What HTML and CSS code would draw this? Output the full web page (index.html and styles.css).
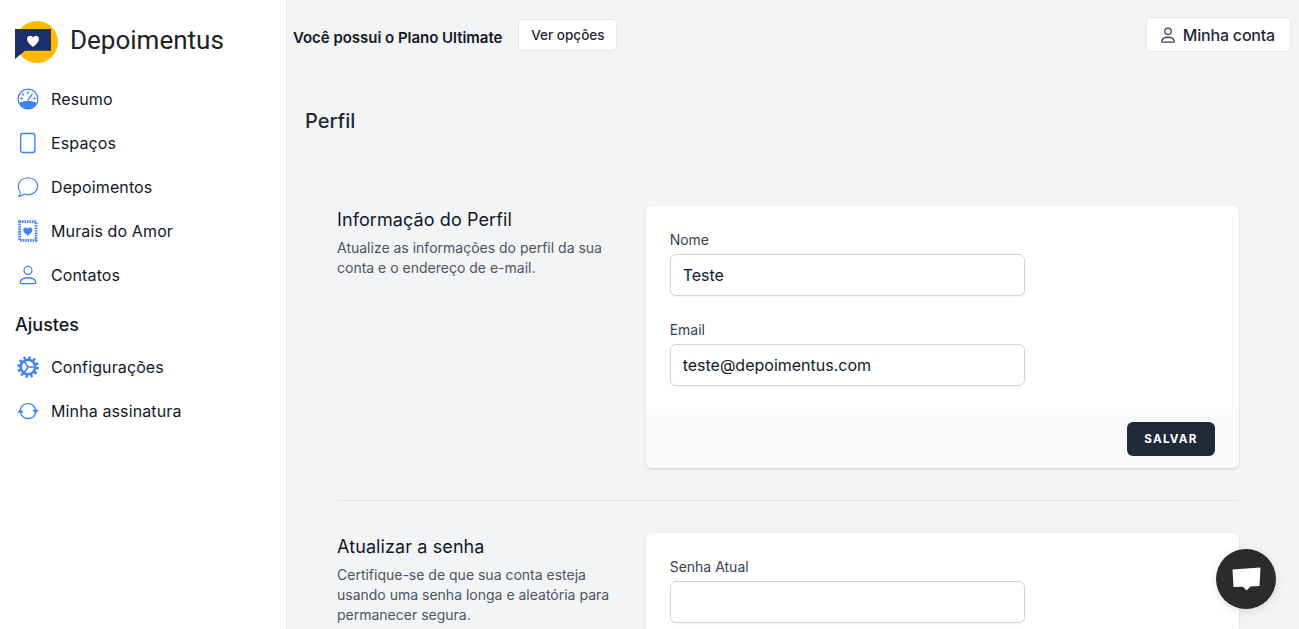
FILE: index.html
```html
<!DOCTYPE html>
<html lang="pt-BR">
<head>
<meta charset="utf-8">
<title>Depoimentus</title>
<link rel="stylesheet" href="styles.css">
</head>
<body>
<div class="app">
  <aside class="sidebar">
    <div class="brand">
      <svg class="logo" width="44" height="44" viewBox="0 0 44 44">
        <circle cx="22" cy="22" r="21" fill="#ffb900"/>
        <path d="M0 9H35.700V30.700H10L0 39Z" fill="#1b2f6e"/>
        <path d="M34.700 9h1V30.700h-1Z" fill="#33302a"/>
        <path d="M18 27c-1-1-6-4.200-6-7.900 0-2 1.400-3.300 3.100-3.300 1.200 0 2.300.7 2.900 1.800.6-1.100 1.700-1.800 2.900-1.800 1.700 0 3.100 1.300 3.100 3.300 0 3.700-5 6.900-6 7.900Z" fill="#fff"/>
      </svg>
      <span class="brand-name">Depoimentus</span>
    </div>
    <nav class="nav">
      <a class="nav-item">
        <svg class="nav-icon" viewBox="0 0 24 24" fill="none" stroke="#3f83f0" stroke-width="1.400">
          <circle cx="12" cy="12" r="10.800"/>
          <path d="M2.200 16.500C5 15 8 14.300 12 14.300s7 .7 9.800 2.200C20 20.500 16.500 22.800 12 22.800S4 20.500 2.200 16.500Z" fill="#3f83f0" stroke="none"/>
          <path d="M12 13 16.500 7M12 4v2M6 6.500l1.200 1.200M4 11.500h2M18 11.500h2" stroke-linecap="round" stroke-width="1.600"/>
        </svg>
        <span>Resumo</span>
      </a>
      <a class="nav-item">
        <svg class="nav-icon" viewBox="0 0 24 24" fill="none" stroke="#3f83f0" stroke-width="1.500"><rect x="4" y="1.700" width="15.500" height="20.600" rx="2"/></svg>
        <span>Espaços</span>
      </a>
      <a class="nav-item">
        <svg class="nav-icon" viewBox="0 0 24 24" fill="none" stroke="#3f83f0" stroke-width="1.300"><path d="M12 1.900c6 0 10.500 4 10.500 9.200S18 20.300 12 20.300c-1.500 0-2.900-.2-4.100-.7-1.500 1.500-3.700 2.500-6 2.600 1.100-1.200 1.700-2.700 1.700-4.300C2 16.200 1.500 13.700 1.500 11.100 1.500 5.900 6 1.900 12 1.900Z" stroke-linejoin="round"/></svg>
        <span>Depoimentos</span>
      </a>
      <a class="nav-item">
        <svg class="nav-icon" viewBox="0 0 24 24" fill="none" stroke="#3f83f0"><rect x="2.800" y="1.800" width="18" height="20.400" stroke-width="3" stroke-dasharray="1.700 1"/><path d="M11.800 16.800c-.9-.9-5-3.200-5-6 0-1.500 1.100-2.500 2.500-2.500 1 0 2 .6 2.500 1.500.5-.9 1.500-1.500 2.500-1.500 1.400 0 2.500 1 2.500 2.500 0 2.800-4.100 5.100-5 6Z" fill="#3f83f0" stroke="none"/></svg>
        <span>Murais do Amor</span>
      </a>
      <a class="nav-item">
        <svg class="nav-icon" viewBox="0 0 24 24" fill="none" stroke="#3f83f0" stroke-width="1.400"><circle cx="12" cy="7" r="4.300"/><path d="M4.500 21.500h15a1 1 0 0 0 1-1.100c-.4-3.300-4-5.400-8.500-5.400s-8.100 2.100-8.500 5.400a1 1 0 0 0 1 1.100Z"/></svg>
        <span>Contatos</span>
      </a>
    </nav>
    <h2 class="nav-heading">Ajustes</h2>
    <nav class="nav">
      <a class="nav-item">
        <svg class="nav-icon" viewBox="0 0 24 24" fill="none" stroke="#3f83f0"><circle cx="12" cy="12" r="10.300" stroke-width="3" stroke-dasharray="2.700 2.690"/><circle cx="12" cy="12" r="8" stroke-width="2.800"/><path d="M12 12 7 4.500M12 12 7 19.500M12 12H20.500" stroke-width="1.800"/></svg>
        <span>Configurações</span>
      </a>
      <a class="nav-item">
        <svg class="nav-icon" viewBox="0 0 24 24" fill="none" stroke="#3f83f0" stroke-width="1.500"><path d="M3.800 10A8.500 8.500 0 0 1 20.300 11M3.800 13.500A8.500 8.500 0 0 0 20.300 14"/><path d="M.4 14h6.800L3.800 9.500ZM16.800 10.500h6.800L20.200 15Z" fill="#3f83f0" stroke="none"/></svg>
        <span>Minha assinatura</span>
      </a>
    </nav>
  </aside>
  <main class="main">
    <header class="topbar">
      <div class="plan">
        <span class="plan-text">Você possui o <strong>Plano Ultimate</strong></span>
        <button class="btn-plain">Ver opções</button>
      </div>
      <button class="btn-account">
        <svg width="18" height="18" viewBox="0 0 24 24" fill="none" stroke="#374151" stroke-width="1.700"><circle cx="12" cy="7" r="4.300"/><path d="M4.500 21.500h15a1 1 0 0 0 1-1.100c-.4-3.300-4-5.400-8.500-5.400s-8.100 2.100-8.500 5.400a1 1 0 0 0 1 1.100Z"/></svg>
        <span>Minha conta</span>
      </button>
    </header>
    <h1 class="page-title">Perfil</h1>
    <div class="content">
      <section class="section">
        <div class="section-info">
          <h3>Informação do Perfil</h3>
          <p>Atualize as informações do perfil da sua conta e o endereço de e-mail.</p>
        </div>
        <div class="card">
          <div class="card-body">
            <label class="field">
              <span class="field-label">Nome</span>
              <input class="input" type="text" value="Teste">
            </label>
            <label class="field">
              <span class="field-label">Email</span>
              <input class="input" type="text" value="teste@depoimentus.com">
            </label>
          </div>
          <div class="card-footer"><button class="btn-dark">SALVAR</button></div>
        </div>
      </section>
      <section class="section section-divided">
        <div class="section-info">
          <h3>Atualizar a senha</h3>
          <p>Certifique-se de que sua conta esteja usando uma senha longa e aleatória para permanecer segura.</p>
        </div>
        <div class="card">
          <div class="card-body">
            <label class="field">
              <span class="field-label">Senha Atual</span>
              <input class="input" type="password">
            </label>
          </div>
        </div>
      </section>
    </div>
  </main>
</div>
<button class="chat-fab" aria-label="Chat">
  <svg width="32" height="26" viewBox="0 0 32 26"><path d="M2.500 3.500 30.500 1.500 29.500 20 20.500 20.500 16.500 24.500 13 20.800 3.500 21Z" fill="#fff"/></svg>
</button>
</body>
</html>
```

FILE: styles.css
```css
* { box-sizing: border-box; }
html, body { margin: 0; height: 100%; overflow: hidden; }
body {
  font-family: Inter, "Liberation Sans", sans-serif;
  background: #f3f4f6;
  color: #111827;
}
.app { display: flex; height: 629px; }

.sidebar {
  width: 287px;
  flex: none;
  background: #fff;
  border-right: 1px solid #e5e7eb;
  padding: 20px 0 0 15px;
}
.brand { display: flex; align-items: center; gap: 11px; height: 44px; }
.logo { flex: none; }
.brand-name {
  font-family: Roboto, sans-serif;
  font-size: 26px;
  color: #202124;
  margin-bottom: 4px;
}
.nav { display: flex; flex-direction: column; }
.brand + .nav { margin-top: 13px; }
.nav-item {
  display: flex;
  align-items: center;
  height: 44px;
  gap: 12px;
  padding-left: 2px;
  font-size: 16px;
  letter-spacing: .12px;
  color: #111827;
}
.nav-icon { width: 22px; height: 22px; flex: none; }
.nav-heading {
  margin: 14px 0 6px;
  height: 28px;
  line-height: 28px;
  font-size: 18px;
  font-weight: 500;
  color: #111827;
}

.main { flex: 1; min-width: 0; overflow: hidden; }
.topbar {
  display: flex;
  justify-content: space-between;
  align-items: flex-start;
  padding: 17px 8px 0 6px;
  height: 70px;
}
.plan { display: flex; align-items: center; gap: 16px; margin-top: 2px; }
.plan-text { font-size: 15px; font-weight: 600; color: #111827; letter-spacing: -.03px; margin-top: 4px; }
.plan-text strong { font-weight: 600; }
.btn-plain, .btn-account {
  font-family: inherit;
  background: #fff;
  border: 1px solid #e5e7eb;
  border-radius: 4px;
  cursor: pointer;
}
.btn-plain { height: 32px; width: 99px; padding: 0; font-size: 13.500px; font-weight: 500; color: #1f2937; }
.btn-account {
  display: flex;
  align-items: center;
  gap: 6px;
  height: 35px;
  padding: 0 15px 0 12px;
  font-size: 16px;
  font-weight: 500;
  color: #1f2937;
  letter-spacing: -.2px;
}
.page-title {
  margin: 0;
  padding: 37px 0 0 18px;
  height: 136px;
  font-size: 20px;
  line-height: 28px;
  font-weight: 500;
  color: #1f2937;
}
.content { padding: 0 60px 0 50px; }
.section {
  display: grid;
  grid-template-columns: repeat(3, minmax(0, 1fr));
  column-gap: 24px;
  padding-bottom: 32px;
}
.section-divided { border-top: 1px solid #e5e7eb; padding-top: 32px; }
.section-info h3 {
  margin: 0;
  font-size: 18px;
  line-height: 28px;
  font-weight: 400;
  letter-spacing: .1px;
  color: #111827;
}
.section-info p {
  margin: 4px 0 0;
  font-size: 14px;
  line-height: 20px;
  color: #4b5563;
}
.card {
  grid-column: span 2;
  background: #fff;
  border-radius: 6px;
  box-shadow: 0 1px 3px rgba(0,0,0,.1), 0 1px 2px rgba(0,0,0,.06);
  overflow: hidden;
}
.card-body { padding: 24px 24px 23px; display: flex; flex-direction: column; gap: 24px; }
.field { display: block; width: 355px; }
.field-label {
  display: block;
  font-size: 14px;
  line-height: 20px;
  font-weight: 400;
  color: #374151;
}
.input {
  display: block;
  width: 100%;
  height: 42px;
  margin-top: 4px;
  padding: 0 12px;
  font-family: inherit;
  font-size: 16px;
  color: #111827;
  background: #fff;
  border: 1px solid #d1d5db;
  border-radius: 6px;
  box-shadow: 0 1px 2px rgba(0,0,0,.05);
  outline: none;
}
.card-footer {
  display: flex;
  justify-content: flex-end;
  padding: 13px 24px 12px;
  background: #f9fafb;
}
.btn-dark {
  height: 34px;
  width: 88px;
  padding: 0;
  font-family: inherit;
  font-size: 11.700px;
  font-weight: 700;
  letter-spacing: 1.200px;
  color: #fff;
  background: #1f2937;
  border: 0;
  border-radius: 6px;
}
.chat-fab {
  position: fixed;
  left: 1216px;
  top: 549px;
  width: 60px;
  height: 60px;
  padding: 0;
  display: flex;
  align-items: center;
  justify-content: center;
  background: #2b2b2b;
  border: 0;
  border-radius: 50%;
  box-shadow: 0 2px 10px rgba(0,0,0,.12);
}
```
